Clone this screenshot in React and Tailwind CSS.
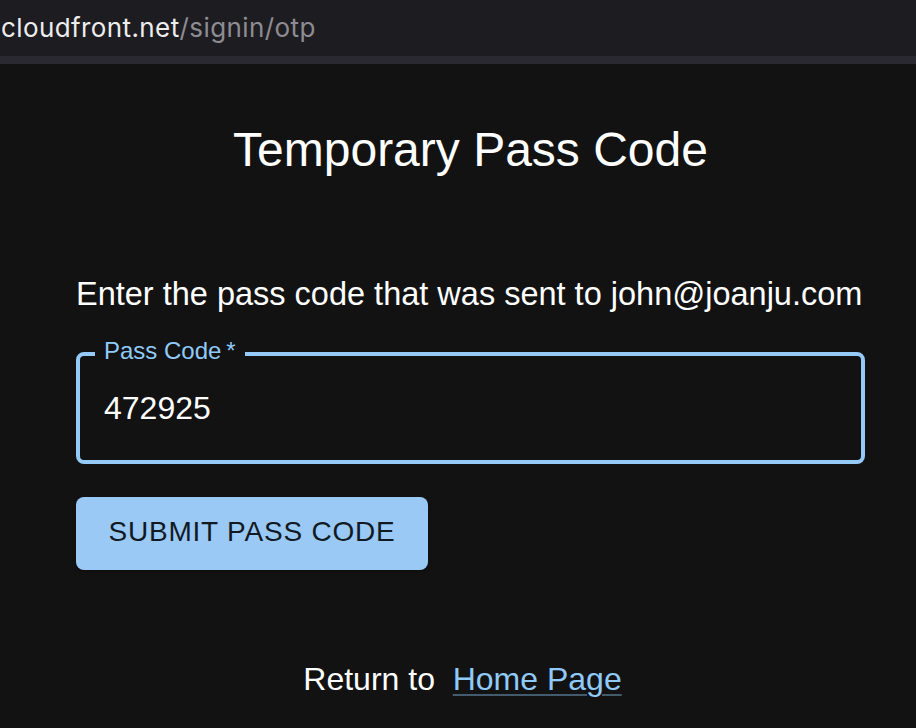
export default function App() {
  return (
    <div className="flex min-h-[728px] w-[916px] flex-col bg-[#121212] font-['Liberation_Sans',Arial,sans-serif] text-white">
      {/* address bar */}
      <div className="flex h-14 items-center bg-[#1d1c21] pl-[1px] font-['Inter',sans-serif] text-[26px] leading-none tracking-[0.4px]">
        <span className="text-[#ededee]">cloudfront.net</span>
        <span className="text-[#8d8c92]">/signin/otp</span>
      </div>
      <div className="h-2 bg-[#2a2932]" />

      <main className="ml-[76px] flex w-[789px] flex-col">
        <h1 className="mt-[58px] text-center text-[48px] font-normal leading-[56px]">
          Temporary Pass Code
        </h1>

        <p className="mt-[96px] text-[32.5px] leading-[40px]">
          Enter the pass code that was sent to john@joanju.com
        </p>

        <div className="relative mt-[38px] flex h-[112px] items-center rounded-[8px] border-4 border-[#95c9f7] pl-[24px]">
          <span className="absolute left-[15px] top-[-19px] bg-[#121212] px-[9px] text-[24px] leading-[28px] text-[#90caf9]">
            Pass Code{'\u2009'}*
          </span>
          <span className="text-[32px] leading-[40px]">472925</span>
        </div>

        <button
          type="button"
          className="mt-[33px] flex h-[73px] w-[352px] items-center justify-center rounded-[8px] bg-[#9ac9f6] pb-[3px] text-[28px] uppercase leading-[36px] tracking-[0.8px] text-[#111a23] shadow-[0_3px_2px_-2px_rgba(0,0,0,0.2),0_2px_4px_0_rgba(0,0,0,0.14)]"
        >
          Submit Pass Code
        </button>

        <p className="mt-[89px] pr-[16px] text-center text-[32px] leading-[40px]">
          Return to{'\u00a0\u00a0'}
          <a
            href="#"
            className="text-[#90caf9] underline decoration-[rgba(144,202,249,0.4)] decoration-2 underline-offset-[4px]"
          >
            Home Page
          </a>
        </p>
      </main>
    </div>
  )
}
